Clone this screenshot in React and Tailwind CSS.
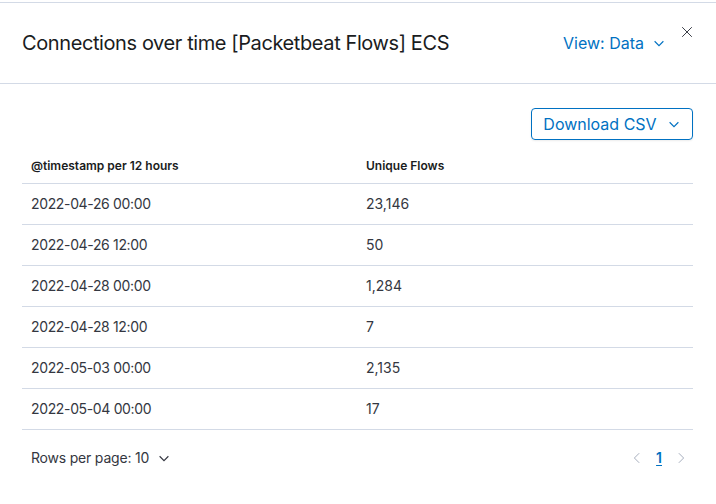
import React from 'react';

const rows = [
    ['2022-04-26 00:00', '23,146'],
    ['2022-04-26 12:00', '50'],
    ['2022-04-28 00:00', '1,284'],
    ['2022-04-28 12:00', '7'],
    ['2022-05-03 00:00', '2,135'],
    ['2022-05-04 00:00', '17'],
];

const Chevron = ({ className }) => (
    <svg viewBox="0 0 16 16" className={className} fill="none" stroke="currentColor" strokeWidth="1.3">
        <path d="M3 6l5 5 5-5" />
    </svg>
);

const App = () => {
    return (
        <div className="w-[716px] h-[504px] bg-white text-[#343741] font-['Inter','Liberation_Sans',sans-serif] overflow-hidden">
            <div className="mt-[2px] border-t border-[#d3dae6]">
                {/* Header */}
                <div className="relative h-[81px] flex items-center pl-[22px] pr-[48px] border-b border-[#d3dae6]">
                    <h1 className="text-[20px] text-[#1a1c21] flex-1 tracking-[-0.4px]">
                        Connections over time [Packetbeat Flows] ECS
                    </h1>
                    <button className="flex items-center gap-[8px] text-[16px] text-[#0071c2] mr-[2px]">
                        View: Data
                        <Chevron className="w-[14px] h-[14px]" />
                    </button>
                    <button className="absolute right-[22px] top-[22px] text-[#343741]">
                        <svg viewBox="0 0 16 16" className="w-[14px] h-[14px]" fill="none" stroke="currentColor" strokeWidth="1.1">
                            <path d="M2.5 2.5l11 11M13.5 2.5l-11 11" />
                        </svg>
                    </button>
                </div>

                {/* Body */}
                <div className="px-[22px] pt-[24px]">
                    <div className="flex justify-end pr-[1px]">
                        <button className="h-[32px] w-[162px] flex items-center justify-center gap-[10px] border border-[#0071c2] rounded-[4px] text-[16px] text-[#0071c2] shadow-[0_1px_2px_rgba(0,0,0,0.08)]">
                            Download CSV
                            <Chevron className="w-[14px] h-[14px]" />
                        </button>
                    </div>

                    <table className="w-[671px] mt-[9px] border-collapse">
                        <thead>
                            <tr className="border-b border-[#d3dae6]">
                                <th className="h-[34px] pl-[9px] text-left text-[12px] font-semibold text-[#1a1c21] w-[344px]">@timestamp per 12 hours</th>
                                <th className="h-[34px] text-left text-[12px] font-semibold text-[#1a1c21]">Unique Flows</th>
                            </tr>
                        </thead>
                        <tbody>
                            {rows.map((r) => (
                                <tr key={r[0]} className="border-b border-[#d3dae6]">
                                    <td className="h-[41px] pl-[9px] text-[14px] tracking-[-0.35px]">{r[0]}</td>
                                    <td className="h-[41px] text-[14px]">{r[1]}</td>
                                </tr>
                            ))}
                        </tbody>
                    </table>

                    <div className="flex items-center justify-between h-[56px] pl-[9px] pr-[6px]">
                        <button className="flex items-center gap-[8px] text-[14px] text-[#343741] tracking-[-0.2px]">
                            Rows per page: 10
                            <Chevron className="w-[14px] h-[14px]" />
                        </button>
                        <div className="flex items-center gap-[12px]">
                            <svg viewBox="0 0 16 16" className="w-[14px] h-[16px] text-[#a2abba]" fill="none" stroke="currentColor" strokeWidth="1.1">
                                <path d="M10.5 2.5L5 8l5.5 5.5" />
                            </svg>
                            <span className="text-[14px] font-semibold text-[#0071c2] underline underline-offset-2">1</span>
                            <svg viewBox="0 0 16 16" className="w-[14px] h-[16px] text-[#a2abba]" fill="none" stroke="currentColor" strokeWidth="1.1">
                                <path d="M5.5 2.5L11 8l-5.5 5.5" />
                            </svg>
                        </div>
                    </div>
                </div>
            </div>
        </div>
    );
};

export default App;
